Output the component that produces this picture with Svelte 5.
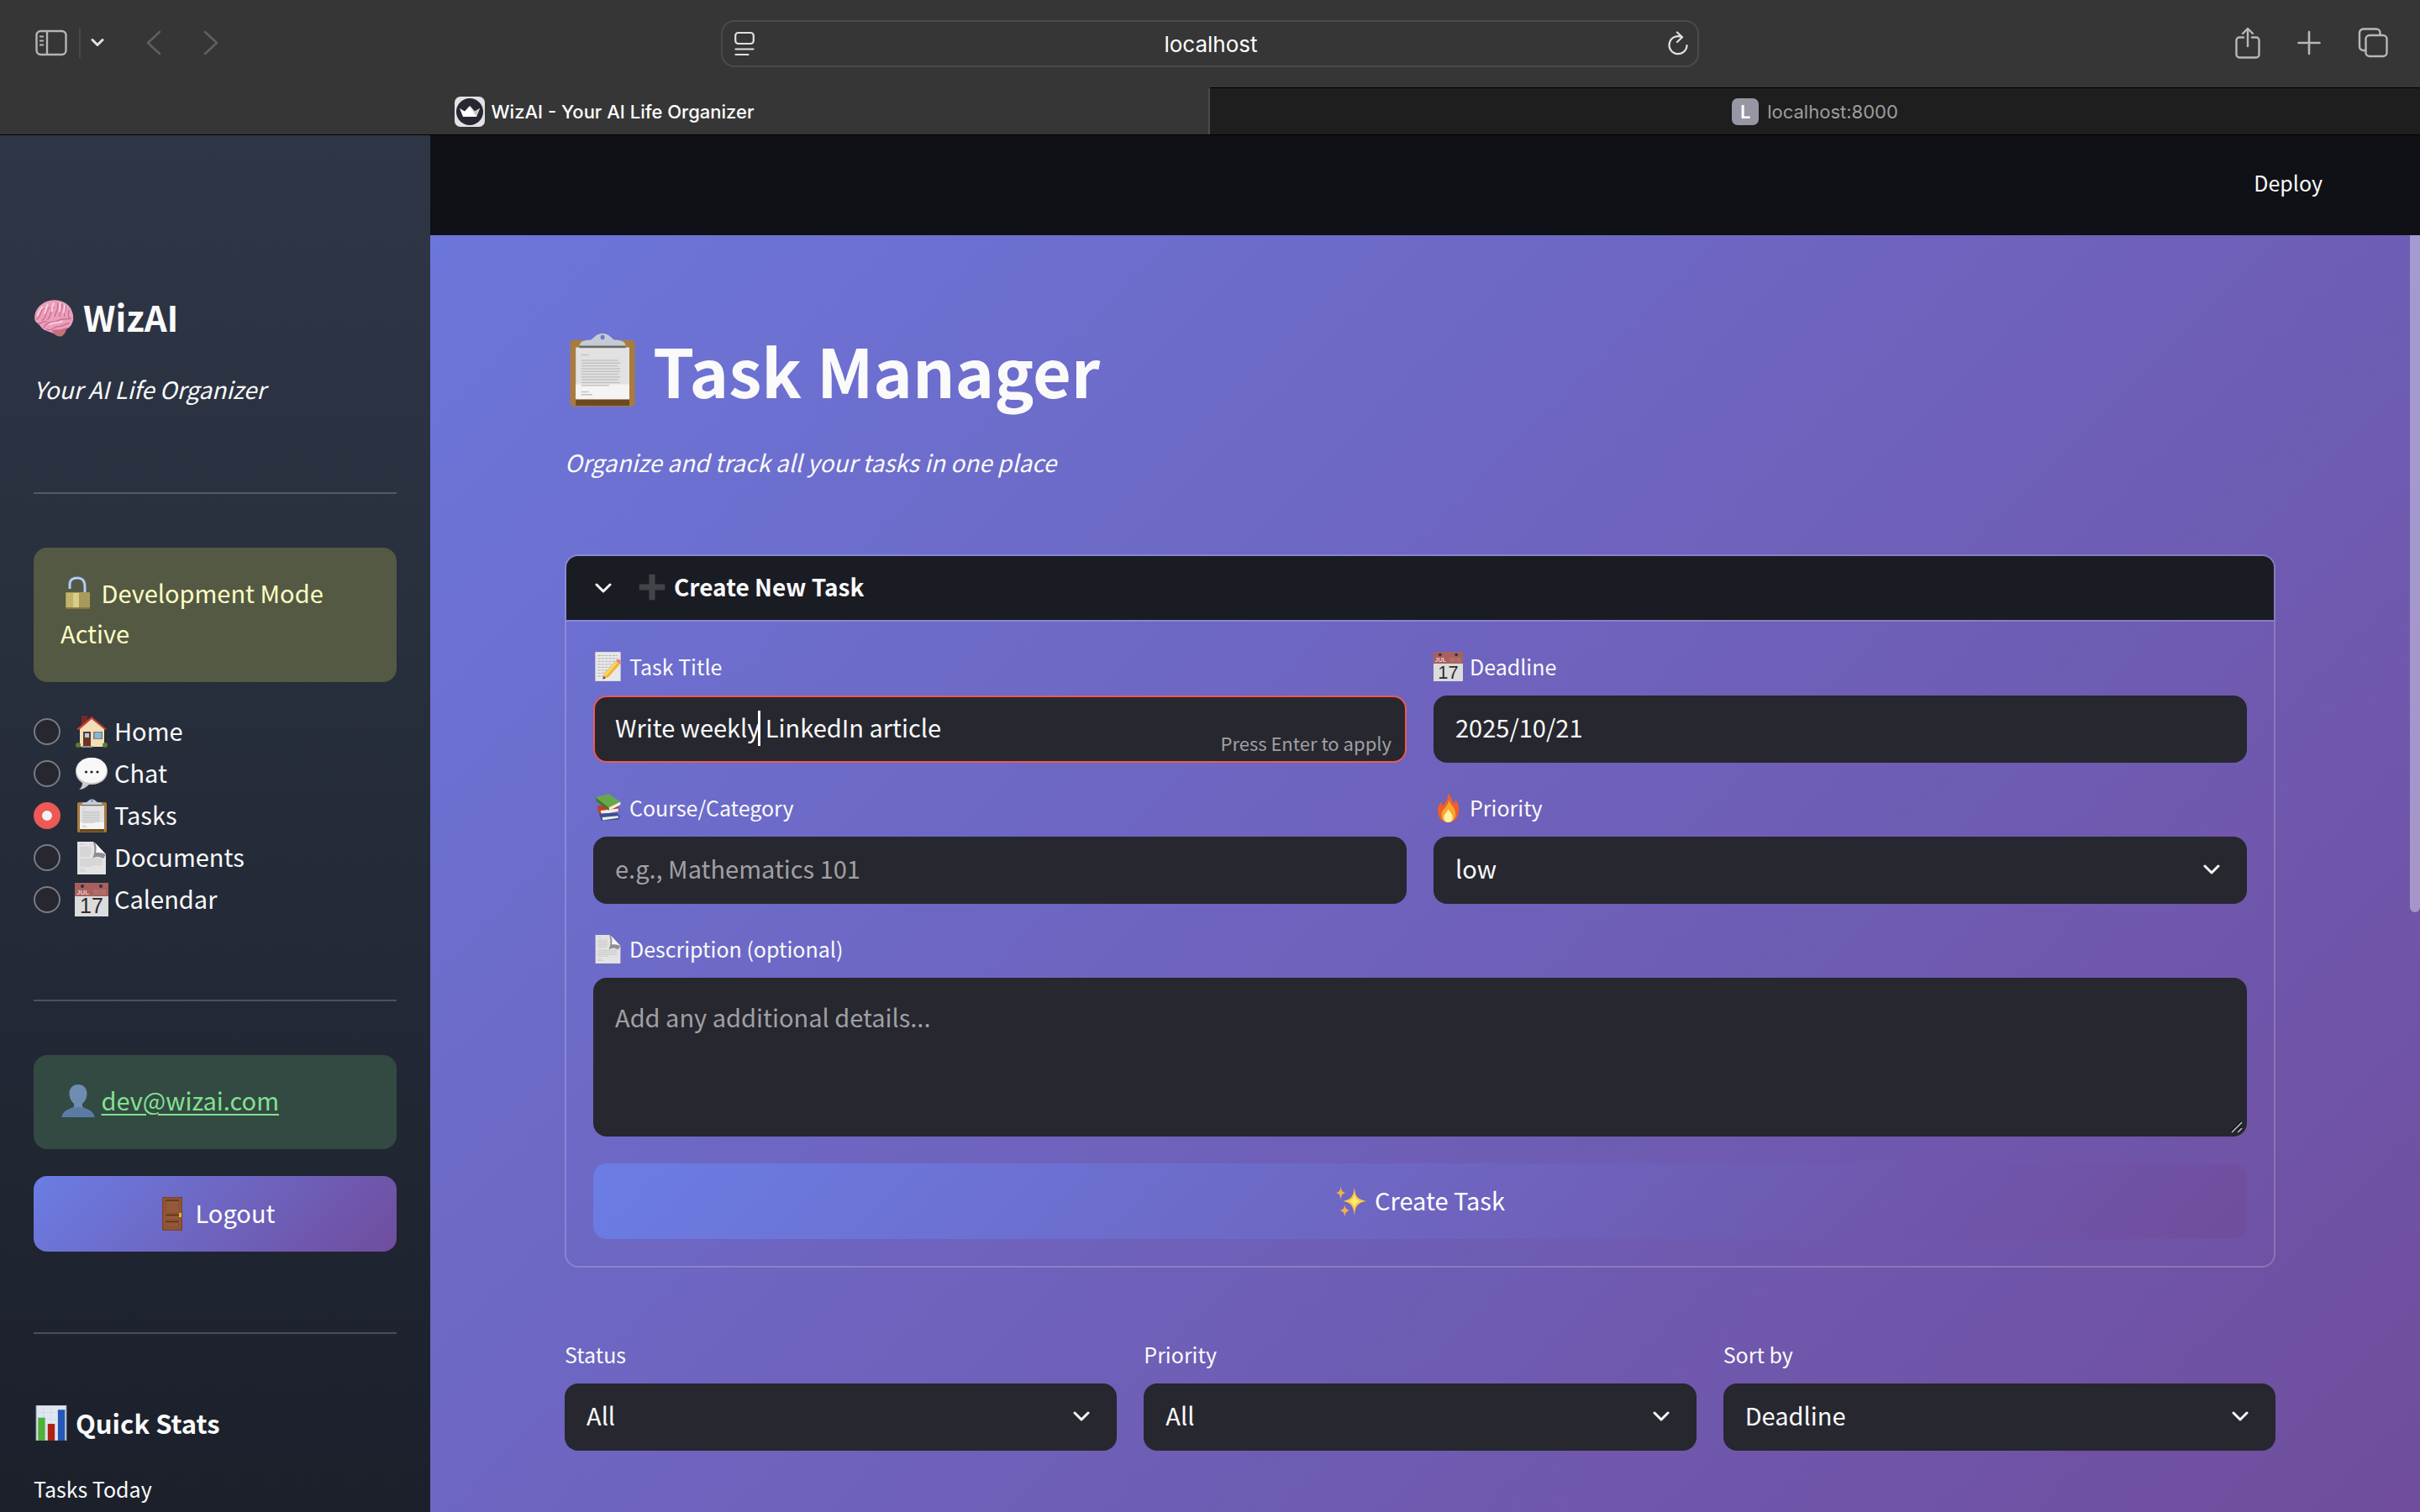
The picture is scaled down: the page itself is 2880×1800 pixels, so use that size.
<script lang="ts">
  const pages = [
    { id: 'home', label: 'Home' },
    { id: 'chat', label: 'Chat' },
    { id: 'tasks', label: 'Tasks' },
    { id: 'documents', label: 'Documents' },
    { id: 'calendar', label: 'Calendar' }
  ];
  let page = $state('tasks');
  let title = $state('Write weekly LinkedIn article');
  let deadline = $state('2025/10/21');
  let category = $state('');
  let priority = $state('low');
  let description = $state('');

  const filters = [
    { id: 'status', label: 'Status', options: ['All', 'Pending', 'Completed'] },
    { id: 'filter-priority', label: 'Priority', options: ['All', 'low', 'medium', 'high'] },
    { id: 'sort', label: 'Sort by', options: ['Deadline', 'Priority', 'Created'] }
  ];
</script>

{#snippet chevron()}
  <svg class="chevron" width="20" height="12" viewBox="0 0 20 12" fill="none" stroke="#fafafa" stroke-width="3" stroke-linecap="round" stroke-linejoin="round" aria-hidden="true"><path d="M2 2l8 8 8-8" /></svg>
{/snippet}

{#snippet emoji(name: string, size: number)}
  <svg class="emoji" width={size} height={size} viewBox="0 0 40 40" aria-hidden="true">
    {#if name === 'brain'}
      <path d="M1 19C1 11 8 3 18 2c10-1 18 4 20 11 3 7 1 15-6 18-3 6-8 8-12 4l-8-3C8 31 7 27 4 25 1 23 1 21 1 19z" fill="#eb9fba" />
      <path d="M22 31c4 1 8-1 11-2-1 6-4 9-7 9-3 0-6-3-8-6z" fill="#c4717c" />
      <g fill="none" stroke="#c86c92" stroke-width="1.100" stroke-linecap="round">
        <path d="M3 21c5-3 3-8 7-11M8 22c6-2 2-8 8-13M14 21c4-4 2-8 6-12M21 18c1-5 4-6 3-13M26 18c-1-6 4-6 2-12M31 18c-2-4 2-6 1-11M36 20c-3-2-1-6-1-8" />
        <path d="M10 29c4-8 11-4 15-7 4-3 8 0 12-2M13 31c6 2 6-3 12-3 4 0 6-3 10-3M5 25c3 0 4-2 8-2" />
      </g>
      <g fill="none" stroke="#fbd3e0" stroke-width="1.500" stroke-linecap="round"><path d="M9 9c-3 2-4 5-5 8M14 6c-2 3-1 6-3 9M20 5c-2 3-1 5-2 8M26 5v8M31 7l-1 7M16 26c5-3 8-1 12-3" /></g>
    {:else if name === 'lock'}
      <path d="M10 15V10C10 4 14 2 19 2s9 3 9 10v8" fill="none" stroke="#7f9cc6" stroke-width="3.600" />
      <path d="M10 15V10C10 4 14 2 19 2s9 3 9 10v8" fill="none" stroke="#d7e4f5" stroke-width="1.400" />
      <rect x="5" y="19" width="29" height="20" rx="1" fill="#a89a5b" />
      <rect x="6" y="20" width="8" height="18" fill="#c2b36c" /><rect x="14" y="20" width="7" height="18" fill="#d9ce86" />
      <path d="M5 38h29" stroke="#7a6a33" stroke-width="1.500" />
    {:else if name === 'home'}
      <rect x="8" y="1" width="7" height="12" fill="#7c2722" />
      <path d="M6 16L20 3l15 13v22H6z" fill="#f2dfb7" />
      <path d="M2 17L20 2l18 15-2 1L20 5 5 18z" fill="#c23d31" />
      <rect x="10" y="20" width="9" height="18" fill="#6e3322" /><rect x="12" y="22" width="5" height="5" fill="#9ed3f3" />
      <rect x="22" y="20" width="11" height="9" fill="#8e7a66" /><rect x="23.500" y="21" width="8" height="7" fill="#7db8e8" />
      <circle cx="4" cy="36" r="3" fill="#5c7c2e" /><circle cx="36" cy="36" r="3" fill="#5c7c2e" />
      <rect x="8" y="37" width="13" height="2" fill="#9a9287" />
    {:else if name === 'chat'}
      <path d="M20 1c11 0 19 7 19 16s-8 16-19 16h-3c-3 3-8 6-12 6 3-2 4-5 4-8C4 28 1 23 1 17 1 8 9 1 20 1z" fill="#c9c9c9" />
      <path d="M20 1c10 0 18 6 18 15s-8 15-18 15S2 25 2 16 10 1 20 1z" fill="#f8f8f8" />
      <circle cx="13.500" cy="18" r="1.600" fill="#222" /><circle cx="20" cy="18" r="1.600" fill="#222" /><circle cx="27" cy="18" r="1.600" fill="#222" />
    {:else if name === 'tasks'}
      <rect x="3" y="4" width="35" height="36" rx="2" fill="#a87c3f" />
      <rect x="6" y="36" width="29" height="3.500" fill="#6b4a20" />
      <path d="M6 8h29v28H6z" fill="#e2e2e2" />
      <path d="M6 28h29v8H6z" fill="#f4f4f4" />
      <g stroke="#c2c2c2" stroke-width=".7"><path d="M9 12h4M9 15h20M9 16.500h21M9 18h20M9 19.500h21M9 21h21M9 22.500h20M9 24h21M9 25.500h20M9 27h21M9 28.500h15M9 32h4M9 33.500h6" /></g>
      <path d="M8 7.500C8 5 10 4 14 4c2-1 3-3.500 6.500-3.500S25 3 27 4c4 0 6 1 6 3.500z" fill="#c3ccd6" />
      <path d="M8 7h25v1.300H8z" fill="#6e6a63" />
      <ellipse cx="20.500" cy="2.500" rx="1.100" ry="1.300" fill="#7178b8" />
    {:else if name === 'documents'}
      <path d="M3 1h19l15 15v24H3z" fill="#e3e3e3" />
      <path d="M22 1l15 15-3 5c-4-2-8-3-13 0 3-6 3-13 1-20z" fill="#8f8f8f" />
      <path d="M24 2l13 14c-4-2-8-2-12-2 1-4 1-8-1-12z" fill="#fafafa" />
      <g stroke="#c3c3c3" stroke-width=".8"><path d="M6 4h5M6 8h13M6 10h14M6 12h13M6 14h14M6 16h13M6 18h12M6 22h26M6 24h27M6 26h26M6 28h27M6 30h15M6 34h5M6 36h8" /></g>
    {:else if name === 'calendar'}
      <rect x="0" y="0" width="40" height="40" fill="#dcdcdc" />
      <rect x="0" y="0" width="40" height="16" fill="#a8605d" />
      <circle cx="9" cy="4" r="2" fill="#2a2f45" /><circle cx="31" cy="4" r="2" fill="#2a2f45" />
      <text x="2" y="14" class="month">JUL</text>
      <path d="M23 8v6M25 8v6M27 8v6M29 8v6M32 8v6M34 8v6M36 8v6" stroke="#c08a86" stroke-width=".7" />
      <text x="20" y="36" text-anchor="middle" class="day">17</text>
    {:else if name === 'person'}
      <path d="M20 1c7 0 11 5 10.500 12C30 19 27 22 25 24v3c1 4 13 3 14.500 13H.5C2 30 14 31 15 27v-3c-2-2-5-5-5.500-11C9 6 13 1 20 1z" fill="#6d8db2" />
      <path d="M20 28c8 0 17 3 19.500 12H.5C3 31 12 28 20 28z" fill="#5a7ba5" />
    {:else if name === 'door'}
      <rect x="8" y="0" width="24" height="40" fill="#7b4529" /><rect x="9.500" y="1.500" width="21" height="37" fill="#94593a" />
      <path d="M12 4h16M12 21.500h16M12 29.500h16" stroke="#573019" stroke-width="1.600" />
      <path d="M12 4v15h16V4M12 23v4h16v-4M12 31v5h16v-5" fill="none" stroke="#7d472b" stroke-width=".8" />
      <rect x="28" y="19" width="3" height="5" fill="#d9b43a" />
    {:else if name === 'stats'}
      <rect x="3" y="0" width="34" height="40" fill="#dfe7f1" stroke="#aab4c0" />
      <path d="M3 8h34M3 16h34M3 24h34M3 32h34M11 0v40M20 0v40M29 0v40" stroke="#cbd6e3" stroke-width=".6" />
      <rect x="5" y="14" width="8" height="26" fill="#4fb03a" /><rect x="16" y="21" width="8" height="19" fill="#ad2118" /><rect x="27.500" y="5" width="8" height="35" fill="#2457b8" />
    {:else if name === 'plus'}
      <path d="M16 3h8v13h13v8H24v13h-8V24H3v-8h13z" fill="#434446" />
    {:else if name === 'memo'}
      <rect x="3" y="0" width="34" height="40" fill="#e9e9e9" stroke="#c4c4c4" />
      <g stroke="#a5a5a5" stroke-width=".9" stroke-dasharray="4 1"><path d="M6 5h27M6 9h27M6 13h25M6 17h22M6 21h19M6 25h15M6 29h12M6 33h9" /></g>
      <path d="M13 37l2-8 16-17 5 5-15 17z" fill="#f0b43a" /><path d="M14 31l17-18 2 2-16 18z" fill="#f9d66c" />
      <path d="M31 12l2-2c2-1 6 3 5 5l-2 2z" fill="#e5857b" /><path d="M13 37l1-4 3 3z" fill="#444" />
    {:else if name === 'books'}
      <path d="M5 18l24-4 6 6-1 5-26 4z" fill="#c23f2a" /><path d="M10 24l24-3v4l-23 4z" fill="#f0ece2" />
      <path d="M8 28l24-1 4 4-1 5-24 2z" fill="#3d4d94" /><path d="M12 33l22-2v3l-21 3z" fill="#eeeae0" />
      <path d="M3 6l18-5 16 11-16 8z" fill="#67a84b" /><path d="M21 20l16-8v4l-15 8z" fill="#f3f0e8" /><path d="M3 6l18 14 1 4L4 11z" fill="#3d7a2d" />
    {:else if name === 'fire'}
      <path d="M20 0c5 6 4 10 8 14 2-1 2-3 2-5 5 6 5 12 4 18-1 8-7 13-14 13S7 35 6 27c-1-6 1-12 5-16 0 3 0 5 2 6 4-5 7-9 7-17z" fill="#ed5f2b" />
      <path d="M21 9c1 7 9 10 9 19 0 7-4 12-10 12S10 35 11 28c0-6 9-9 10-19z" fill="#f8a52d" />
      <path d="M20 22c2 4 6 6 6 11 0 4-3 7-6 7s-6-3-6-7 4-6 6-11z" fill="#fff2a0" />
    {:else if name === 'sparkles'}
      <path d="M24 3c1 11 4 15 15 17-11 2-14 6-15 18-1-12-4-16-14-18 10-2 13-6 14-17z" fill="#fbc93f" />
      <path d="M24 11c1 6 3 8 8 9-5 1-7 3-8 9-1-6-3-8-8-9 5-1 7-3 8-9z" fill="#ffe873" />
      <path d="M7 1c.5 6 2 7.500 6 8.500-4 1-5.500 3-6 9-.5-6-2-8-6-9 4-1 5.500-2.500 6-8.500zM12 24c.5 5 2 6.500 6 7.500-4 1-5.500 3-6 8-.5-5-2-7-6-8 4-1 5.500-2.500 6-7.500z" fill="#f2b24a" />
    {/if}
  </svg>
{/snippet}

<div class="window">
  <div class="toolbar">
    <div class="tools left">
      <button class="tool" aria-label="Show sidebar">
        <svg width="38" height="32" viewBox="0 0 38 32" fill="none" stroke="#b5b5b5" stroke-width="2.400"><rect x="1.500" y="2" width="35" height="28" rx="5" /><path d="M14 2v28" /><path d="M5 8.500h5M5 13.500h5M5 18.500h5" stroke-width="2" /></svg>
      </button>
      <span class="rule"></span>
      <button class="tool" aria-label="Tab groups">
        <svg width="16" height="12" viewBox="0 0 16 12" fill="none" stroke="#e4e4e4" stroke-width="3" stroke-linecap="round" stroke-linejoin="round"><path d="M2 2.500l6 6 6-6" /></svg>
      </button>
      <button class="tool nav" aria-label="Back">
        <svg width="18" height="30" viewBox="0 0 18 30" fill="none" stroke="#5f5f5f" stroke-width="2.600" stroke-linecap="round" stroke-linejoin="round"><path d="M16 2L2 15l14 13" /></svg>
      </button>
      <button class="tool nav" aria-label="Forward">
        <svg width="18" height="30" viewBox="0 0 18 30" fill="none" stroke="#5f5f5f" stroke-width="2.600" stroke-linecap="round" stroke-linejoin="round"><path d="M2 2l14 13L2 28" /></svg>
      </button>
    </div>
    <div class="address">
      <svg width="24" height="30" viewBox="0 0 24 30" fill="none" stroke="#e0e0e0" stroke-width="2.200" stroke-linecap="round" aria-hidden="true"><rect x="1.200" y="2" width="21.600" height="13" rx="3.500" /><path d="M1.500 21.500h21M1.500 28h15" /></svg>
      <span class="host">localhost</span>
      <button class="tool" aria-label="Reload">
        <svg width="26" height="30" viewBox="0 0 26 30" fill="none" stroke="#e0e0e0" stroke-width="2.200" stroke-linecap="round" stroke-linejoin="round"><path d="M17.500 7.200A10.500 10.500 0 1 0 23.500 17" /><path d="M12 1.500l6 5.800-6 5.700" /></svg>
      </button>
    </div>
    <div class="tools right">
      <button class="tool" aria-label="Share">
        <svg width="30" height="38" viewBox="0 0 30 38" fill="none" stroke="#b8b8b8" stroke-width="2.400" stroke-linecap="round" stroke-linejoin="round"><path d="M10 12.500H5a3.500 3.500 0 0 0-3.500 3.500v17A3.500 3.500 0 0 0 5 36.500h20a3.500 3.500 0 0 0 3.500-3.500V16a3.500 3.500 0 0 0-3.500-3.500h-5" /><path d="M15 23V2M9 8l6-6 6 6" /></svg>
      </button>
      <button class="tool" aria-label="New tab">
        <svg width="28" height="38" viewBox="0 0 28 38" fill="none" stroke="#b8b8b8" stroke-width="2.600" stroke-linecap="round"><path d="M14 6v26M1.500 19h25" /></svg>
      </button>
      <button class="tool" aria-label="Tab overview">
        <svg width="36" height="38" viewBox="0 0 36 38" fill="none" stroke="#b8b8b8" stroke-width="2.400" stroke-linecap="round"><rect x="9.500" y="10" width="25" height="25" rx="4.500" /><path d="M9 28H6.500A4.500 4.500 0 0 1 2 23.500V7a4.500 4.500 0 0 1 4.500-4.500H22A4.500 4.500 0 0 1 26.500 7v2.500" /></svg>
      </button>
    </div>
  </div>

  <div class="tabs">
    <button class="tab active">
      <svg width="36" height="36" viewBox="0 0 36 36" aria-hidden="true"><rect width="36" height="36" rx="7" fill="#e2e2e3" /><circle cx="18" cy="18" r="16" fill="#262730" /><path d="M6 14l6 3.500 6-6.500 6 6.500 6-3.500-4 10H10z" fill="#fff" /><path d="M18 11l6 6.500 6-3.500-4 10z" fill="#c9c9cc" /></svg>
      <span>WizAI - Your AI Life Organizer</span>
    </button>
    <button class="tab"><span class="badge">L</span><span>localhost:8000</span></button>
  </div>

  <div class="app">
    <aside class="sidebar">
      <h2 class="brand">{@render emoji('brain', 48)}<span>WizAI</span></h2>
      <p class="tagline">Your AI Life Organizer</p>
      <hr class="line-a" />
      <p class="note dev">{@render emoji('lock', 40)} Development Mode Active</p>
      <div class="pages" role="radiogroup" aria-label="Navigation">
        {#each pages as item (item.id)}
          <label class="page">
            <input type="radio" name="page" value={item.id} bind:group={page} />
            {@render emoji(item.id, 40)}
            <span>{item.label}</span>
          </label>
        {/each}
      </div>
      <hr class="line-b" />
      <p class="note user">{@render emoji('person', 40)} <a href="mailto:dev@wizai.com">dev@wizai.com</a></p>
      <button class="primary logout">{@render emoji('door', 40)}<span>Logout</span></button>
      <hr class="line-c" />
      <h3 class="stats">{@render emoji('stats', 42)}<span>Quick Stats</span></h3>
      <p class="metric">Tasks Today</p>
    </aside>

    <div class="pane">
      <header class="header"><button class="deploy">Deploy</button></header>
      <div class="scroller">
        <main class="content">
          <h1>{@render emoji('tasks', 88)}<span>Task Manager</span></h1>
          <p class="lead">Organize and track all your tasks in one place</p>

          <details class="expander" open>
            <summary>{@render chevron()}{@render emoji('plus', 36)}<span>Create New Task</span></summary>
            <form class="form" onsubmit={(e) => e.preventDefault()}>
              <div class="field">
                <label for="title">{@render emoji('memo', 35)}<span>Task Title</span></label>
                <div class="control">
                  <input id="title" class="box focused" type="text" bind:value={title} />
                  <span class="caret"></span>
                  <span class="hint">Press Enter to apply</span>
                </div>
              </div>
              <div class="field">
                <label for="deadline">{@render emoji('calendar', 35)}<span>Deadline</span></label>
                <div class="control"><input id="deadline" class="box" type="text" bind:value={deadline} /></div>
              </div>
              <div class="field">
                <label for="category">{@render emoji('books', 35)}<span>Course/Category</span></label>
                <div class="control"><input id="category" class="box" type="text" placeholder="e.g., Mathematics 101" bind:value={category} /></div>
              </div>
              <div class="field">
                <label for="priority">{@render emoji('fire', 35)}<span>Priority</span></label>
                <div class="control">
                  <select id="priority" class="box" bind:value={priority}>
                    <option>low</option><option>medium</option><option>high</option>
                  </select>
                  {@render chevron()}
                </div>
              </div>
              <div class="field wide">
                <label for="description">{@render emoji('documents', 35)}<span>Description (optional)</span></label>
                <div class="control">
                  <textarea id="description" class="box" placeholder="Add any additional details..." bind:value={description}></textarea>
                  <svg class="grip" width="18" height="18" viewBox="0 0 18 18" stroke-width="1.500" aria-hidden="true"><path d="M1 14L13 2M8 14l6-6" stroke="#0c0c0f" /><path d="M2 15L14 3M9 15l5-5" stroke="#c4c4c6" /></svg>
                </div>
              </div>
              <button class="primary submit wide" type="submit">{@render emoji('sparkles', 38)}<span>Create Task</span></button>
            </form>
          </details>

          <div class="filters">
            {#each filters as filter (filter.id)}
              <div class="field">
                <label for={filter.id}><span>{filter.label}</span></label>
                <div class="control">
                  <select id={filter.id} class="box">
                    {#each filter.options as option (option)}<option>{option}</option>{/each}
                  </select>
                  {@render chevron()}
                </div>
              </div>
            {/each}
          </div>
        </main>
        <div class="track"><div class="thumb"></div></div>
      </div>
    </div>
  </div>
</div>

<style>
  :global(body) { margin: 0; background: #1a202c; }
  * { box-sizing: border-box; }
  h1, h2, h3, p, hr { margin: 0; }
  button { border: 0; background: none; padding: 0; color: inherit; font: inherit; cursor: pointer; }
  svg { display: block; flex: none; }

  .window {
    display: flex; flex-direction: column; height: 100vh; overflow: hidden;
    color: #fafafa; font: 400 29px/48px "Noto Sans CJK SC", "Noto Sans", sans-serif;
  }

  /* browser chrome */
  .toolbar {
    flex: none; height: 104px; background: #363636; padding: 0 38px;
    display: grid; grid-template-columns: 1fr minmax(600px, 1164px) 1fr; align-items: center;
    font-family: Inter, sans-serif;
  }
  .tools { display: flex; align-items: center; }
  .left { gap: 14px; padding: 0 0 2px 4px; }
  .rule { width: 2px; height: 36px; background: #484848; }
  .left .nav { margin-left: 36px; }
  .rule + .tool { margin-left: -2px; }
  .right { justify-content: flex-end; gap: 44px; padding-bottom: 2px; }
  .address {
    height: 56px; border: 2px solid #4b4b4b; border-radius: 16px; padding: 0 10px 0 14px;
    display: flex; align-items: center; justify-content: space-between;
  }
  .host { font-size: 26px; line-height: 32px; color: #fff; padding-top: 2px; }
  .tabs {
    flex: none; height: 57px; display: grid; grid-template-columns: 1fr 1fr; background: #1e1e1e;
    border-bottom: 1px solid #000; font: 400 22px/32px Inter, sans-serif;
  }
  .tab { display: flex; align-items: center; justify-content: center; gap: 10px; color: #9d9d9d; border-top: 1px solid #000; }
  .tab.active { background: #363636; border-top-color: #363636; border-right: 2px solid #4a4a4a; color: #fff; font-weight: 500; gap: 8px; }
  .badge { width: 32px; height: 32px; border-radius: 7px; background: #9796a3; color: #fff; font-weight: 600; text-align: center; }

  /* application */
  .app {
    flex: 1; min-height: 0; display: grid; grid-template-columns: 512px minmax(0, 1fr); grid-template-rows: minmax(0, 1fr);
    background: linear-gradient(135deg, #6b7de4 0%, #704d9d 100%);
  }
  .sidebar {
    overflow: hidden; padding: 187px 40px 0; display: flex; flex-direction: column;
    background: linear-gradient(180deg, #2f3747 0%, #1b202b 100%);
  }
  .sidebar > :global(*) { flex: none; }
  hr { border: 0; height: 2px; background: rgba(250, 250, 250, 0.2); }
  .line-a { margin: 99px 0 64px; }
  .line-b { margin: 94px 0 64px; }
  .line-c { margin: 96px 0 84px; }
  .brand { display: flex; align-items: center; gap: 11px; font: 700 42px/58px "Noto Sans CJK SC", sans-serif; }
  .brand .emoji { margin-top: 4px; }
  .tagline, .lead { font-size: 28px; font-style: italic; margin-top: 33px; }
  .note { border-radius: 16px; padding: 29px 32px 35px; }
  .note .emoji { display: inline-block; vertical-align: -8px; margin: 0 1px; }
  .dev { background: #545943; color: #fefec5; }
  .user { background: #334a42; color: #83e192; }
  .user a { color: inherit; text-decoration-thickness: 2px; text-underline-offset: 4px; }
  .pages { margin-top: 34px; }
  .page { display: flex; align-items: center; height: 50px; }
  .page .emoji { margin: 0 7px 0 17px; }
  .page span { padding-bottom: 4px; }
  .page input {
    appearance: none; width: 32px; height: 32px; margin: 0; border-radius: 50%;
    border: 2px solid #797b85; background: #27272f;
  }
  .page input:checked { border: 10px solid #ec5a53; background: #f0f2f6; }
  .primary {
    height: 90px; border-radius: 16px; display: flex; align-items: center; justify-content: center;
    color: #fff; background: linear-gradient(135deg, #6b7de4 0%, #704d9d 100%);
  }
  .primary span { padding-bottom: 4px; }
  .logout { margin-top: 32px; gap: 8px; }
  .stats { display: flex; align-items: center; gap: 8px; font: 700 31px/44px "Noto Sans CJK SC", sans-serif; }
  .metric { margin-top: 36px; font-size: 25px; line-height: 40px; }

  .pane { display: flex; flex-direction: column; min-width: 0; }
  .header { flex: none; height: 119px; background: #0f1116; display: flex; align-items: center; justify-content: flex-end; padding: 0 116px 8px; }
  .deploy { font-size: 25px; line-height: 40px; }
  .scroller { flex: 1; min-height: 0; display: flex; overflow: hidden; }
  .content { flex: 1; min-width: 0; padding: 107px 160px 0; }
  .track { flex: none; width: 12px; }
  .thumb { height: 53%; border-radius: 0 0 6px 6px; background: rgba(255, 255, 255, 0.38); }

  h1 { display: flex; align-items: center; gap: 17px; font: 700 79px/106px "Noto Sans CJK SC", sans-serif; }

  .expander { margin-top: 86px; border: 2px solid rgba(250, 250, 250, 0.2); border-radius: 16px; overflow: hidden; }
  summary {
    display: flex; align-items: center; height: 78px; padding: 0 34px; cursor: pointer; list-style: none;
    background: #1a1c24; background-clip: padding-box; border-bottom: 2px solid rgba(250, 250, 250, 0.2);
    font-size: 28px; font-weight: 700;
  }
  summary .emoji { margin: 0 8px 2px 30px; }
  summary span { padding-bottom: 4px; }
  .form { display: grid; grid-template-columns: repeat(2, minmax(0, 1fr)); gap: 35px 32px; padding: 35px 32px 32px; }
  .wide { grid-column: 1 / -1; }
  .field { display: flex; flex-direction: column; gap: 17px; }
  .field label { display: flex; align-items: center; gap: 8px; font-size: 25px; line-height: 36px; }
  .control { position: relative; display: grid; align-items: center; }
  .box {
    grid-area: 1 / 1; width: 100%; height: 80px; margin: 0; padding: 0 70px 6px 26px; border: 0; border-radius: 16px;
    background: #27272f; color: #fafafa; font: inherit; appearance: none; outline: none; resize: none;
  }
  .box::placeholder { color: #a0a0a4; opacity: 1; }
  .box.focused { border: 2px solid #ec5a53; padding-left: 24px; }
  textarea.box { height: 189px; padding-top: 22px; }
  .control .chevron { grid-area: 1 / 1; justify-self: end; margin: 0 32px 2px 0; pointer-events: none; }
  .caret { position: absolute; left: 196px; top: 18px; width: 3px; height: 42px; background: #fff; }
  .hint { position: absolute; right: 18px; bottom: 8px; font-size: 22px; line-height: 32px; color: #a0a0a4; }
  .grip { position: absolute; right: 2px; bottom: 2px; }
  .submit { margin-top: -3px; gap: 9px; }
  .filters { margin-top: 85px; display: grid; grid-template-columns: repeat(3, minmax(0, 1fr)); gap: 32px; }

  .month { font: 700 8px "Liberation Sans", sans-serif; fill: #e6cfcd; }
  .day { font: 400 25px "Liberation Sans", sans-serif; fill: #2c2c2c; }
</style>
